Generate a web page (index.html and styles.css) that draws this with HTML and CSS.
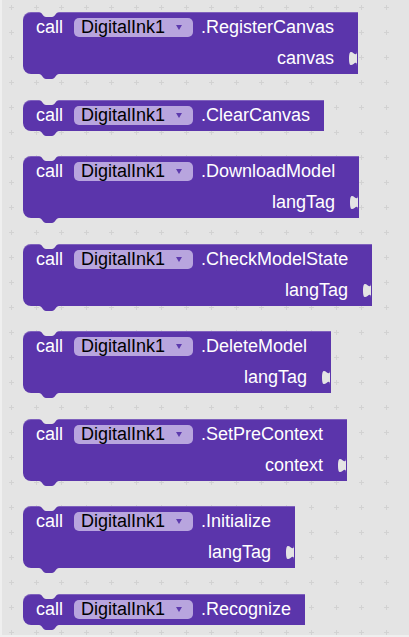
FILE: index.html
```html
<!DOCTYPE html>
<html>
<head>
<meta charset="utf-8">
<link rel="stylesheet" href="styles.css">
</head>
<body>
<div class="workspace">
  <svg class="grid" width="100%" height="100%" aria-hidden="true">
    <defs>
      <pattern id="plus" x="-3" y="-5" width="25" height="25" patternUnits="userSpaceOnUse">
        <rect x="10" y="12" width="5" height="1" fill="#d2d2d2"/>
        <rect x="12" y="10" width="1" height="5" fill="#d2d2d2"/>
      </pattern>
    </defs>
    <rect width="100%" height="100%" fill="url(#plus)"/>
  </svg>

  <div class="block has-input">
    <div class="row"><span class="kw">call</span><span class="field">DigitalInk1<i class="arrow"></i></span><span class="method">.RegisterCanvas</span></div>
    <div class="row arg"><span>canvas</span></div>
    <svg class="notch" viewBox="0 0 20 5"><path d="M0,0 C3,0 4,5 7,5 H13 C16,5 17,0 20,0 Z"/></svg>
    <svg class="tab" viewBox="0 0 20 5"><path d="M0,0 C3,0 4,5 7,5 H13 C16,5 17,0 20,0 Z"/></svg>
    <svg class="socket" viewBox="0 0 8 20"><path d="M8,5 C8,15 0,-3 0,12.5 S8,10 8,20 Z"/></svg>
  </div>

  <div class="block">
    <div class="row"><span class="kw">call</span><span class="field">DigitalInk1<i class="arrow"></i></span><span class="method">.ClearCanvas</span></div>
    <svg class="notch" viewBox="0 0 20 5"><path d="M0,0 C3,0 4,5 7,5 H13 C16,5 17,0 20,0 Z"/></svg>
    <svg class="tab" viewBox="0 0 20 5"><path d="M0,0 C3,0 4,5 7,5 H13 C16,5 17,0 20,0 Z"/></svg>
  </div>

  <div class="block has-input">
    <div class="row"><span class="kw">call</span><span class="field">DigitalInk1<i class="arrow"></i></span><span class="method">.DownloadModel</span></div>
    <div class="row arg"><span>langTag</span></div>
    <svg class="notch" viewBox="0 0 20 5"><path d="M0,0 C3,0 4,5 7,5 H13 C16,5 17,0 20,0 Z"/></svg>
    <svg class="tab" viewBox="0 0 20 5"><path d="M0,0 C3,0 4,5 7,5 H13 C16,5 17,0 20,0 Z"/></svg>
    <svg class="socket" viewBox="0 0 8 20"><path d="M8,5 C8,15 0,-3 0,12.5 S8,10 8,20 Z"/></svg>
  </div>

  <div class="block has-input">
    <div class="row"><span class="kw">call</span><span class="field">DigitalInk1<i class="arrow"></i></span><span class="method">.CheckModelState</span></div>
    <div class="row arg"><span>langTag</span></div>
    <svg class="notch" viewBox="0 0 20 5"><path d="M0,0 C3,0 4,5 7,5 H13 C16,5 17,0 20,0 Z"/></svg>
    <svg class="tab" viewBox="0 0 20 5"><path d="M0,0 C3,0 4,5 7,5 H13 C16,5 17,0 20,0 Z"/></svg>
    <svg class="socket" viewBox="0 0 8 20"><path d="M8,5 C8,15 0,-3 0,12.5 S8,10 8,20 Z"/></svg>
  </div>

  <div class="block has-input">
    <div class="row"><span class="kw">call</span><span class="field">DigitalInk1<i class="arrow"></i></span><span class="method">.DeleteModel</span></div>
    <div class="row arg"><span>langTag</span></div>
    <svg class="notch" viewBox="0 0 20 5"><path d="M0,0 C3,0 4,5 7,5 H13 C16,5 17,0 20,0 Z"/></svg>
    <svg class="tab" viewBox="0 0 20 5"><path d="M0,0 C3,0 4,5 7,5 H13 C16,5 17,0 20,0 Z"/></svg>
    <svg class="socket" viewBox="0 0 8 20"><path d="M8,5 C8,15 0,-3 0,12.5 S8,10 8,20 Z"/></svg>
  </div>

  <div class="block has-input">
    <div class="row"><span class="kw">call</span><span class="field">DigitalInk1<i class="arrow"></i></span><span class="method">.SetPreContext</span></div>
    <div class="row arg"><span>context</span></div>
    <svg class="notch" viewBox="0 0 20 5"><path d="M0,0 C3,0 4,5 7,5 H13 C16,5 17,0 20,0 Z"/></svg>
    <svg class="tab" viewBox="0 0 20 5"><path d="M0,0 C3,0 4,5 7,5 H13 C16,5 17,0 20,0 Z"/></svg>
    <svg class="socket" viewBox="0 0 8 20"><path d="M8,5 C8,15 0,-3 0,12.5 S8,10 8,20 Z"/></svg>
  </div>

  <div class="block has-input">
    <div class="row"><span class="kw">call</span><span class="field">DigitalInk1<i class="arrow"></i></span><span class="method">.Initialize</span></div>
    <div class="row arg"><span>langTag</span></div>
    <svg class="notch" viewBox="0 0 20 5"><path d="M0,0 C3,0 4,5 7,5 H13 C16,5 17,0 20,0 Z"/></svg>
    <svg class="tab" viewBox="0 0 20 5"><path d="M0,0 C3,0 4,5 7,5 H13 C16,5 17,0 20,0 Z"/></svg>
    <svg class="socket" viewBox="0 0 8 20"><path d="M8,5 C8,15 0,-3 0,12.5 S8,10 8,20 Z"/></svg>
  </div>

  <div class="block">
    <div class="row"><span class="kw">call</span><span class="field">DigitalInk1<i class="arrow"></i></span><span class="method">.Recognize</span></div>
    <svg class="notch" viewBox="0 0 20 5"><path d="M0,0 C3,0 4,5 7,5 H13 C16,5 17,0 20,0 Z"/></svg>
    <svg class="tab" viewBox="0 0 20 5"><path d="M0,0 C3,0 4,5 7,5 H13 C16,5 17,0 20,0 Z"/></svg>
  </div>
</div>
</body>
</html>
```

FILE: styles.css
```css
html, body {
  margin: 0;
  padding: 0;
  background: #efefef;
}

.workspace {
  position: relative;
  margin-left: 2px;
  width: 407px;
  height: 635px;
  box-sizing: border-box;
  background: #e4e4e4;
  padding: 12px 0 0 21px;
  display: flex;
  flex-direction: column;
  align-items: flex-start;
  gap: 25.5px;
  overflow: hidden;
  font-family: "Liberation Sans", Arial, sans-serif;
  font-size: 18px;
  color: #ffffff;
}

.grid {
  position: absolute;
  left: 0;
  top: 0;
  z-index: 0;
}

.block {
  position: relative;
  z-index: 1;
  background: #5b35ab;
  border-radius: 8px 0 0 8px;
  padding: 0 14px 0 13px;
  display: flex;
  flex-direction: column;
  box-shadow: inset 0 1px 0 rgba(255, 255, 255, 0.22);
}

.block.has-input {
  padding-right: 24px;
}

.row {
  height: 31px;
  display: flex;
  align-items: center;
  white-space: nowrap;
}

.row.arg {
  justify-content: flex-end;
}

.kw {
  margin-right: 11px;
}

.field {
  height: 19px;
  margin-right: 8px;
  padding: 0 11px 0 7px;
  border-radius: 5px;
  background: #b8a5de;
  color: #000000;
  display: flex;
  align-items: center;
}

.arrow {
  display: block;
  width: 0;
  height: 0;
  margin-left: 11px;
  border-left: 3.5px solid transparent;
  border-right: 3.5px solid transparent;
  border-top: 5px solid #5d3aad;
}

.notch {
  position: absolute;
  left: 16px;
  top: 0;
  width: 20px;
  height: 5px;
  fill: #e4e4e4;
}

.tab {
  position: absolute;
  left: 16px;
  top: 100%;
  width: 20px;
  height: 5px;
  fill: #5b35ab;
}

.socket {
  position: absolute;
  right: 0;
  top: 34px;
  width: 10px;
  height: 20px;
  fill: #e4e4e4;
}
```
